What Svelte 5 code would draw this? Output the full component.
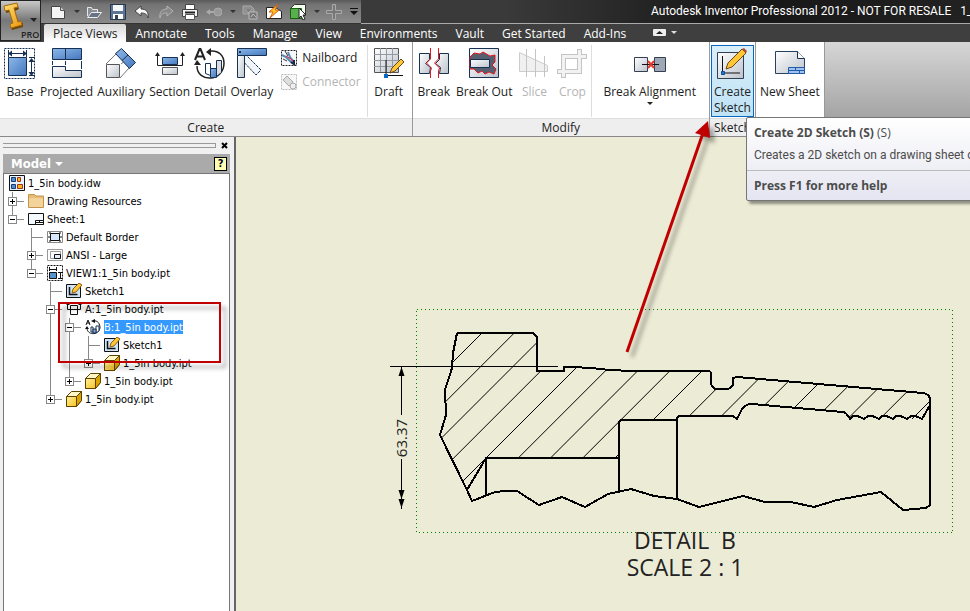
<script lang="ts">
  interface Tool {
    label: string;
    icon: string;
    disabled?: boolean;
  }

  interface TreeRow {
    label: string;
    icon: string;
    depth: number;
    last?: boolean;
    open?: boolean;
  }

  const quickIcons = ['new', 'open', 'save', 'undo', 'redo', 'print', 'back', 'copy', 'update', 'select', 'plus'];
  const tabs = ['Place Views', 'Annotate', 'Tools', 'Manage', 'View', 'Environments', 'Vault', 'Get Started', 'Add-Ins'];

  const createTools: Tool[] = [
    { label: 'Base', icon: 'base' },
    { label: 'Projected', icon: 'projected' },
    { label: 'Auxiliary', icon: 'auxiliary' },
    { label: 'Section', icon: 'section' },
    { label: 'Detail', icon: 'detail' },
    { label: 'Overlay', icon: 'overlay' },
  ];

  const modifyTools: Tool[] = [
    { label: 'Break', icon: 'break' },
    { label: 'Break Out', icon: 'breakout' },
    { label: 'Slice', icon: 'slice', disabled: true },
    { label: 'Crop', icon: 'crop', disabled: true },
  ];

  let rows = $state<TreeRow[]>([
    { label: '1_5in body.idw', icon: 'idw', depth: 0 },
    { label: 'Drawing Resources', icon: 'folder', depth: 1, open: false },
    { label: 'Sheet:1', icon: 'sheet', depth: 1, last: true, open: true },
    { label: 'Default Border', icon: 'border', depth: 2 },
    { label: 'ANSI - Large', icon: 'ansi', depth: 2, open: false },
    { label: 'VIEW1:1_5in body.ipt', icon: 'view', depth: 2, last: true, open: true },
    { label: 'Sketch1', icon: 'sketch', depth: 3 },
    { label: 'A:1_5in body.ipt', icon: 'sectionview', depth: 3, open: true },
    { label: 'B:1_5in body.ipt', icon: 'detailview', depth: 4, open: true },
    { label: 'Sketch1', icon: 'sketch', depth: 5 },
    { label: '1_5in body.ipt', icon: 'part', depth: 5, last: true, open: false },
    { label: '1_5in body.ipt', icon: 'part', depth: 4, last: true, open: false },
    { label: '1_5in body.ipt', icon: 'part', depth: 3, last: true, open: false },
  ]);

  let activeTab = $state(0);
  let selected = $state(8);

  // hide everything below a collapsed row
  const visible = $derived.by(() => {
    const out: number[] = [];
    let limit = Infinity;
    rows.forEach((row, i) => {
      if (row.depth > limit) return;
      limit = row.open === false ? row.depth : Infinity;
      out.push(i);
    });
    return out;
  });

  // does the branch at this depth go on below the row?
  function continues(index: number, depth: number): boolean {
    for (let i = index + 1; i < rows.length; i++) {
      if (rows[i].depth < depth) return false;
      if (rows[i].depth === depth) return true;
    }
    return false;
  }

  const hatch = Array.from({ length: 20 }, (_, k) => 815 + k * 32.25);
  const outline =
    'M457 333H533L537 337V371H564V367H573L591 368L610 370L631 371H708Q711 371 711 374V383Q712 389 717 389H727Q733 388 733 383V378L737 377L923 393Q930 394 930 400';
  const left = 'M457 333L453 353L452 368L445 390L446 415L440 435L467 490';
  const bore =
    'H677V418L679 416H733L737 419L741 411Q744 404 752 404L843 412Q846 412 850 419Q853 415 857 416T864 419Q868 415 872 416T879 419Q882 415 886 416T893 419Q896 415 900 416T907 419Q911 415 915 416T922 419L930 405';
</script>

{#snippet icon(name: string)}
  {#if name === 'new'}
    <path d="M1.500 2.500h9l4 4v8h-13z" fill="#f5f5f5" stroke="#444" /><path d="M10.500 2.500v4h4" fill="#ccc" stroke="#555" />
  {:else if name === 'open'}
    <path d="M1.500 12V3.500h4l1 2h5v3" fill="#8a8f96" stroke="#e8e8e8" /><path d="M1.500 13.500l4-5h10l-4 5z" fill="#667485" stroke="#eee" />
  {:else if name === 'save'}
    <path d="M.5 .5h15v15H.5z" fill="#5d7595" stroke="#26364c" /><path d="M3 1h10v6H3z" fill="#f4f6f9" /><path d="M3 10h10v5H3z" fill="#fff" /><path d="M5 11h3v4H5z" fill="#345" />
  {:else if name === 'undo'}
    <path d="M1 7l6-5v3c5 0 8 3 7 9-1-4-3-5-7-5v3z" fill="#fafafa" stroke="#444" />
  {:else if name === 'redo'}
    <path d="M15 7L9 2v3c-5 0-8 3-7 9 1-4 3-5 7-5v3z" fill="#888" stroke="#b4b4b4" />
  {:else if name === 'print'}
    <path d="M3.500 .5h9v6h-9z" fill="#fff" stroke="#444" /><path d="M.5 5.500h15v7H.5z" fill="#f2f2f2" stroke="#444" /><path d="M3 8.500h10" stroke="#222" stroke-width="2" /><path d="M3.500 10.500h9v5h-9z" fill="#fff" stroke="#555" />
  {:else if name === 'back'}
    <path d="M0 8l4-3v2h4v2H4v2z" fill="#aaa" /><circle cx="12" cy="8" r="4" fill="#999" stroke="#aaa" />
  {:else if name === 'copy'}
    <path d="M1 2h8l3 3v5H1zM3 6l4 3 3-4" fill="#8f8f8f" stroke="#aaa" /><path d="M7 8h8v7H7zM9 13l2-3 3 3" fill="#777" stroke="#bbb" />
  {:else if name === 'update'}
    <path d="M.5 3.500h9l6 4v7H.5z" fill="#fff" stroke="#222" /><path d="M12 0L3 8h4l-3 6 9-8H9z" fill="#ffc629" stroke="#d85b12" />
  {:else if name === 'select'}
    <path d="M.5 4.500l4-4h11v10l-4 4H.5z" fill="#efffea" stroke="#333" /><path d="M.5 4.500h11v10H.5z" fill="#58b04c" stroke="#16620f" /><path d="M9 4v10l2-2 2 4 2-1-2-4h3z" fill="#fff" stroke="#222" />
  {:else if name === 'plus'}
    <path d="M6.500 .5h3v6h6v3h-6v6h-3v-6h-6v-3h6z" fill="#777" stroke="#aaa" />
  {:else if name === 'base'}
    <path d="M.5 .5h30v30H.5z" fill="none" stroke="#173153" stroke-dasharray="2 1" /><path d="M4.500 9.500h18v18h-18z" fill="url(#blue)" stroke="#173153" />
    <path d="M4.500 2v7M22.500 2v7M5 5.500h17M25 9.500h6M25 27.500h6M27.500 11v16" fill="none" stroke="#173153" /><path d="M4 5.500l4-3v6zM23 5.500l-4-3v6zM27.500 10l-3 4h6zM27.500 28l-3-4h6z" fill="#173153" />
  {:else if name === 'projected'}
    <path d="M1.500 .5h29v11h-29zM14.500 .5v11" fill="url(#blue)" stroke="#173153" /><path d="M1.500 18.500h13v4h16v7h-29z" fill="url(#grey)" stroke="#173153" /><path d="M1.500 13v4M14.500 13v4M30.500 13v8" stroke="#173153" />
  {:else if name === 'auxiliary'}
    <path d="M1 16L11 6M15 30L25 19M16 16l5-4" stroke="#777" /><path d="M10.500 5.500l6-5 14 14-6 6zM17 12.500l6-5.500" fill="url(#blue)" stroke="#173153" /><path d="M1.500 16.500h13v13h-13z" fill="url(#grey)" stroke="#555" />
  {:else if name === 'section'}
    <path d="M8.500 9.500h15v7h-15z" fill="url(#blue)" stroke="#173153" /><path d="M8.500 19.500h15v7h-15z" fill="url(#grey)" stroke="#555" /><path d="M3.500 8v9.500h25V8" fill="none" stroke="#222" /><path d="M3.500 4L1 8h5zM28.500 4L26 8h5z" fill="#222" />
  {:else if name === 'detail'}
    <path d="M16 3c9-1 14 5 14 12 0 19-27 20-27 3" fill="none" stroke="#222" stroke-width="1.500" /><path d="M12 4l5-4v8zM3 12l-3 5h7z" fill="#222" /><path d="M1 12L5.500 1h1L11 12M3 8.500h6" fill="none" stroke="#222" stroke-width="2" />
    <path d="M11.500 15.500h5v12l-5-2z" fill="#fff" stroke="#173153" /><path d="M16.500 20.500h6v9h-6z" fill="url(#blue)" stroke="#173153" /><path d="M22.500 12.500h5v12l-5 4z" fill="#ddd" stroke="#173153" />
  {:else if name === 'overlay'}
    <path d="M6 3l19 19-5 5L2 8z" fill="#f1f4f8" stroke="#173153" stroke-dasharray="3 1" /><path d="M1.500 7.500h7v22h-7z" fill="url(#grey)" stroke="#173153" /><path d="M1.500 .5h29v7h-29z" fill="url(#blue)" stroke="#173153" /><circle cx="4" cy="4" r="1" fill="#111" />
  {:else if name === 'draft'}
    <path d="M1.500 .5h24v24h-24z" fill="url(#grey)" stroke="#555" /><path d="M7.500 0v24M13.500 0v24M19.500 0v24M1 6.500h25M1 12.500h25M1 18.500h25" stroke="#9299a1" /><path d="M13 12v15M15 27.500h15" stroke="#111" /><path d="M11 26h4v4h-4z" fill="#0868c7" />
    <path d="M17 25l2-5 9-9 3 3-9 9z" fill="#ffc735" stroke="#6d4616" />
  {:else if name === 'break'}
    <path d="M1.500 5.500h10v6l-4 4 5 4-1 6h-10z" fill="url(#grey)" stroke="#173153" /><path d="M30.500 5.500h-9v6l-4 4 5 4-1 6h9z" fill="url(#grey)" stroke="#173153" /><path d="M12.500 0v11l-4 4 5 5-1 3v7M20.500 0v11l-4 4 5 5-1 3v7" fill="none" stroke="#e51820" />
  {:else if name === 'breakout'}
    <path d="M1.500 .5h29v29h-29z" fill="url(#grey)" stroke="#173153" /><path d="M2 9l4-4 6 1 3-2 7 4 5-1v7l-3 3 4 4-2 5-5-2-4 2-3-3-4 2-4-4H2z" fill="#555f70" stroke="#e51820" /><path d="M2.500 11.500h19v8h-19z" fill="url(#grey)" stroke="#173153" />
  {:else if name === 'slice'}
    <path d="M1.500 4.500v19h28v-6z" fill="#f0f0f0" stroke="#ccc" /><path d="M8.500 1v28M17.500 1v28M26.500 8v21" stroke="#c4c4c4" />
  {:else if name === 'crop'}
    <path d="M7.500 30V8.500H31M1 23.500h22.500V1" fill="none" stroke="#c4c4c4" stroke-width="5" /><path d="M7.500 29V8.500H30M2 23.500h21.500V2" fill="none" stroke="#f2f2f2" stroke-width="3" />
  {:else if name === 'align'}
    <path d="M.5 9.500h13v14H.5z" fill="url(#grey)" stroke="#344052" /><path d="M20.500 9.500h11v14h-11z" fill="#9da7b5" stroke="#344052" /><path d="M8 16.500h17" stroke="#111" /><path d="M14 13l6 7m0-7l-6 7" stroke="#e53a2c" stroke-width="2" />
  {:else if name === 'createsketch'}
    <path d="M1.500 4.500h26v26h-26z" fill="url(#grey)" stroke="#333f50" /><path d="M6.500 8v17H24" fill="none" stroke="#111" /><path d="M5.500 23.500h3v3h-3z" fill="#2579cb" stroke="#0a4f9a" /><path d="M10 21l2-6L26 1l4 4-14 14z" fill="#ffc735" stroke="#6d4616" /><path d="M26 1l4 4 1-2-3-3z" fill="#b54e3a" />
  {:else if name === 'newsheet'}
    <path d="M1.500 3.500h22l7 7v15h-29z" fill="url(#grey)" stroke="#244263" /><path d="M23.500 3.500v7h7" fill="#fff" stroke="#173153" /><path d="M14.500 19.500h16v6h-16zM14 22.500h16M21.500 19v3M25.500 22v3" fill="#9fc3f0" stroke="#2459a5" />
  {:else if name === 'nailboard'}
    <path d="M.5 .5h15v15H.5z" fill="#f6f8fb" stroke="#222" stroke-dasharray="2 1" /><path d="M1 5l4 2 6 6M7 2l2 5 4 5" fill="none" stroke="#5a86b8" stroke-width="2" /><path d="M4 1l3 5M2 9l4 2" stroke="#333" /><path d="M5 6l5 3m0 0l3 4" stroke="#d32c2c" /><path d="M10 12l4 3M13 10v4" stroke="#172945" stroke-width="2" />
  {:else if name === 'connector'}
    <path d="M.5 .5h15v15H.5z" fill="#f7f7f7" stroke="#bbb" stroke-dasharray="2 1" /><path d="M2 6l4-4 6 6-4 4z" fill="#ddd" stroke="#aaa" /><circle cx="12" cy="12" r="3" fill="#eee" stroke="#aaa" />
  {:else if name === 'idw'}
    <path d="M.5 .5h15v15H.5z" fill="#e7f2fd" stroke="#111" /><path d="M2.500 2.500h4v4h-4zM2.500 9.500h4v4h-4z" fill="#4f8fd1" stroke="#113d78" /><path d="M8.500 2.500h3v4h-3zM8.500 9.500h5v4h-5z" fill="#ffb21c" stroke="#a33412" />
  {:else if name === 'folder'}
    <path d="M.5 3V1.500h6L8 3h7.500v11.500H.5z" fill="#e5bd79" stroke="#c4934c" /><path d="M1 5h14v9H1z" fill="#f3d39a" />
  {:else if name === 'sheet'}
    <path d="M.5 2.500h15v11H.5z" fill="#f4f9fe" stroke="#111" /><path d="M7.500 9.500h8v4h-8zM8 11.500h7M11.500 9v2" fill="#fff" stroke="#111" />
  {:else if name === 'border'}
    <path d="M.5 2.500h15v11H.5z" fill="#fff" stroke="#888" /><path d="M3.500 4.500h9v7h-9z" fill="#d8e8fb" stroke="#111" /><path d="M3 3v2M13 3v2M3 11v2M13 11v2M1 8h2M13 8h2" stroke="#111" />
  {:else if name === 'ansi'}
    <path d="M.5 2.500h15v11H.5zM3.500 4.500h10v7h-10z" fill="#fff" stroke="#999" /><path d="M7.500 7.500h6v4h-6z" fill="#e1edfc" stroke="#111" />
  {:else if name === 'view'}
    <path d="M.5 .5h15v15H.5z" fill="#fff" stroke="#111" stroke-dasharray="2 1" /><path d="M2.500 7.500h7v6h-7z" fill="#5793cd" stroke="#111" /><path d="M2.500 2v4M9.500 2v4M2 4.500h7M11 7.500h4M11 13.500h4M13.500 8v5" stroke="#111" />
  {:else if name === 'sketch'}
    <path d="M.5 1.500h14v13H.5z" fill="#cfe3f7" stroke="#111" /><path d="M3.500 4v7.500h8" fill="none" stroke="#111" stroke-width="1.500" /><path d="M6 10l1-4 6-6 3 2-6 7z" fill="#ffc735" stroke="#8b5d18" />
  {:else if name === 'sectionview'}
    <path d="M1.500 4v4.500h13V4M4.500 8V4.500h7V8M4.500 9v4.500h7V9" fill="none" stroke="#111" /><path d="M0 4h4L2 2zM12 4h4l-2-2z" fill="#111" />
  {:else if name === 'detailview'}
    <path d="M8 2c5-1 7 3 7 7-2 8-13 7-13 0" fill="none" stroke="#111" /><path d="M6 2l4-2v4zM2 7L0 10h4z" fill="#111" /><path d="M1 6l2-5 2 5M2 4h3" fill="none" stroke="#111" /><path d="M6 8h2v5H6zM11 7h3v5l-3 2z" fill="#fff" stroke="#173153" /><path d="M8 10h3v4H8z" fill="#85abd3" stroke="#173153" />
  {:else if name === 'part'}
    <path d="M.5 5.500l5-5h10v9l-5 6H.5z" fill="#fff7c5" stroke="#5e4300" /><path d="M.5 5.500h10v10H.5z" fill="url(#gold)" stroke="#5e4300" /><path d="M10.500 5.500l5-5v9l-5 6z" fill="#d9a400" stroke="#5e4300" />
  {/if}
{/snippet}

{#snippet tool(t: Tool)}
  <button class="tool" disabled={t.disabled}>
    <svg class="large" viewBox="0 0 32 32" aria-hidden="true">{@render icon(t.icon)}</svg>
    <span>{t.label}</span>
  </button>
{/snippet}

{#snippet smallTool(t: Tool)}
  <button class="small-tool" disabled={t.disabled}>
    <svg class="small" viewBox="0 0 16 16" aria-hidden="true">{@render icon(t.icon)}</svg>
    <span>{t.label}</span>
  </button>
{/snippet}

<div class="app">
  <svg class="defs" aria-hidden="true">
    <defs>
      <linearGradient id="blue" x2="1" y2="1"><stop stop-color="#8db8ea" /><stop offset="1" stop-color="#4478bd" /></linearGradient>
      <linearGradient id="grey" x2="1" y2="1"><stop stop-color="#fff" /><stop offset="1" stop-color="#bcc3cc" /></linearGradient>
      <linearGradient id="gold" x2="1" y2="1"><stop stop-color="#fff1a0" /><stop offset="1" stop-color="#f7c11d" /></linearGradient>
      <linearGradient id="logo" x2="1" y2="1"><stop stop-color="#ffe07a" /><stop offset="1" stop-color="#e8960c" /></linearGradient>
    </defs>
  </svg>

  <header class="top">
    <button class="app-button" aria-label="Application menu">
      <svg viewBox="0 0 39 39" aria-hidden="true">
        <path d="M5 8L17 5L18 8L14 10L18 23L22 22L22 26L11 29L10 26L13 24L9 11L5 12Z" fill="#6b4508" />
        <path d="M3 5L16 2L17 6L13 7L17 21L20 20L21 24L10 27L9 23L12 22L8 9L4 10Z" fill="url(#logo)" stroke="#a8690c" />
        <path d="M29 17h7l-3 4z" fill="#222" />
        <text x="20" y="37">PRO</text>
      </svg>
    </button>
    <div class="bars">
      <div class="title-bar">
        <div class="quick">
          {#each quickIcons as name}
            <button class="quick-button" aria-label={name}>
              <svg class="small" viewBox="0 0 16 16" aria-hidden="true">{@render icon(name)}</svg>
            </button>
            {#if name === 'new' || name === 'back' || name === 'select'}
              <span class="caret"></span>
            {/if}
          {/each}
          <svg class="customize" viewBox="0 0 8 8" aria-hidden="true"><path d="M0 0h8v1H0zM0 3h8L4 7z" fill="#111" /></svg>
        </div>
        <h1>Autodesk Inventor Professional 2012 - NOT FOR RESALE &nbsp; 1_</h1>
      </div>
      <nav class="tabs">
        {#each tabs as tab, i}
          <button class="tab" class:active={activeTab === i} onclick={() => (activeTab = i)}>{tab}</button>
        {/each}
        <button class="minimize" aria-label="Minimize ribbon">
          <svg viewBox="0 0 26 8" aria-hidden="true"><rect width="13" height="7" rx="1" fill="#eee" /><path d="M3 5h7L6.500 2z" fill="#222" /><path d="M18 2h6l-3 3z" fill="#ddd" /></svg>
        </button>
      </nav>
    </div>
  </header>

  <div class="ribbon">
    <section class="panel create">
      <div class="tools">
        {#each createTools as t}
          {@render tool(t)}
        {/each}
        <div class="stack">
          {@render smallTool({ label: 'Nailboard', icon: 'nailboard' })}
          {@render smallTool({ label: 'Connector', icon: 'connector', disabled: true })}
        </div>
        <div class="group">{@render tool({ label: 'Draft', icon: 'draft' })}</div>
      </div>
      <h2>Create</h2>
    </section>
    <section class="panel">
      <div class="tools">
        {#each modifyTools as t}
          {@render tool(t)}
        {/each}
        <div class="group align">
          <button class="tool">
            <svg class="large" viewBox="0 0 32 32" aria-hidden="true">{@render icon('align')}</svg>
            <span>Break Alignment</span>
            <span class="caret"></span>
          </button>
        </div>
      </div>
      <h2>Modify</h2>
    </section>
    <section class="panel sketch">
      <div class="tools">
        <div class="hot">
          <button class="tool" aria-describedby="tip">
            <svg class="large" viewBox="0 0 32 32" aria-hidden="true">{@render icon('createsketch')}</svg>
            <span>Create<br />Sketch</span>
          </button>
          <div class="tooltip" id="tip" role="tooltip">
            <div class="tip-body">
              <p><b>Create 2D Sketch (S)</b> (S)</p>
              <p class="tip-text">Creates a 2D sketch on a drawing sheet or view</p>
            </div>
            <p class="tip-help"><b>Press F1 for more help</b></p>
          </div>
        </div>
      </div>
      <h2>Sketch</h2>
    </section>
    <section class="panel sheets">
      <div class="tools">
        {@render tool({ label: 'New Sheet', icon: 'newsheet' })}
      </div>
    </section>
  </div>

  <div class="workspace">
    <aside class="browser">
      <div class="grip">
        <span class="grip-lines"></span>
        <button class="close" aria-label="Close">
          <svg viewBox="0 0 7 7" aria-hidden="true"><path d="M1 1l5 5M6 1L1 6" stroke="#000" stroke-width="2" /></svg>
        </button>
      </div>
      <div class="browser-head">
        <button class="model">Model <span class="caret"></span></button>
        <button class="help" aria-label="Help">?</button>
      </div>
      <ul class="tree">
        {#each visible as i (i)}
          {@const row = rows[i]}
          <li>
            {#each { length: row.depth } as _, d}
              {#if d + 1 < row.depth}
                <svg class="guide" viewBox="0 0 19 18" aria-hidden="true">
                  {#if continues(i, d + 1)}<path d="M3.500 0v18" />{/if}
                </svg>
              {:else if row.open === undefined}
                <svg class="guide" viewBox="0 0 19 18" aria-hidden="true"><path d="M3.500 0v18M3 9.500h12" /></svg>
              {:else}
                <button class="expander" aria-label={row.open ? 'Collapse' : 'Expand'} onclick={() => (row.open = !row.open)}>
                  <svg class="guide" viewBox="0 0 19 18" aria-hidden="true">
                    <path d={row.last ? 'M3.500 0v9M3 9.500h12' : 'M3.500 0v18M3 9.500h12'} />
                    <rect x="-.5" y="5.500" width="8" height="8" />
                    <path class="sign" d={row.open ? 'M1 9.500h5' : 'M1 9.500h5M3.500 7v5'} />
                  </svg>
                </button>
              {/if}
            {/each}
            <svg class="small" viewBox="0 0 16 16" aria-hidden="true">{@render icon(row.icon)}</svg>
            <button class="node" class:selected={selected === i} onclick={() => (selected = i)}>{row.label}</button>
          </li>
        {/each}
      </ul>
    </aside>

    <main class="canvas">
      <svg class="drawing" viewBox="236 137 734 474" role="img" aria-label="Detail B, scale 2 : 1">
        <clipPath id="solid">
          <path d="{outline}V405L922 419L907 419H850L843 412L752 404Q744 404 741 411L737 416H677V420H619V458H486L467 490L440 435L446 415L445 390L452 368L453 353Z" />
        </clipPath>
        <g class="hatch" clip-path="url(#solid)">
          {#each hatch as sum}
            <path d="M{sum - 520} 520L{sum - 320} 320" />
          {/each}
        </g>
        <g class="edges">
          <path d={outline} />
          <path d={left} />
          <path d="M467 490L486 458H619V422L621 420{bore}" />
          <path d="M467 490L472 501L495 492L505 491H517L539 505L562 497L585 507L608 494L631 489L654 496L677 499L699 507L743 496L765 502H791L814 507L837 500L881 492L903 510L926 508L930 505V400" />
          <path d="M486 458V495M619 458V491M677 420V499" />
        </g>
        <path class="thin" d="M390 366.500h168M401.500 367v48M401.500 459v50" />
        <path d="M401.500 367l-3 9h6zM401.500 499l-3-9h6zM401.500 508l-3-9h6z" />
        <rect class="bounds" x="416.500" y="309.500" width="536" height="223" />
        <text class="dimension" transform="translate(407 438) rotate(-90)">63.37</text>
        <text class="caption" x="685" y="549">DETAIL &nbsp;B</text>
        <text class="caption" x="685" y="576">SCALE 2 : 1</text>
      </svg>
    </main>
  </div>

  <svg class="markup" viewBox="0 0 970 611" aria-hidden="true">
    <rect x="59" y="303" width="161" height="59" />
    <path class="shaft" d="M627 352L703 133" />
    <path class="head" d="M708 121L695 133L710 138Z" />
  </svg>
</div>

<style>
  :global(body) {
    margin: 0;
    font-family: 'Open Sans', 'Noto Sans', sans-serif;
    font-size: 12px;
    color: #222;
  }

  button {
    font: inherit;
    color: inherit;
    background: none;
    border: 0;
    padding: 0;
    margin: 0;
  }

  h1, h2, p, ul {
    margin: 0;
    padding: 0;
    font-size: 12px;
    font-weight: 400;
  }

  .app {
    position: relative;
    min-height: 100vh;
    display: flex;
    flex-direction: column;
    overflow: hidden;
  }

  .defs {
    position: absolute;
    width: 0;
    height: 0;
  }

  .large {
    display: block;
    width: 32px;
    height: 32px;
    flex-shrink: 0;
  }

  .small {
    display: block;
    width: 16px;
    height: 16px;
    flex-shrink: 0;
  }

  .caret {
    display: inline-block;
    border: 3px solid transparent;
    border-top-color: currentColor;
    border-bottom: 0;
  }

  /* Title bar and tabs */
  .top {
    display: flex;
    height: 42px;
    background: #3f3f3f;
  }

  .app-button {
    width: 41px;
    height: 41px;
    flex-shrink: 0;
    background: linear-gradient(#c8c8c8, #777 50%, #999);
    border: 1px solid #222;
  }

  .app-button svg {
    display: block;
    width: 39px;
    height: 39px;
  }

  .app-button text {
    font-size: 9px;
    font-weight: 600;
    fill: #222;
  }

  .bars {
    flex: 1;
    min-width: 0;
  }

  .title-bar {
    display: flex;
    height: 24px;
    background: linear-gradient(90deg, #3a3a3a 50%, #161616 75%, #222);
  }

  .quick {
    display: flex;
    align-items: center;
    gap: 8px;
    width: 320px;
    padding-left: 9px;
    box-sizing: border-box;
    flex-shrink: 0;
    color: #333;
    background: linear-gradient(#5a5a5a, #747474 20%, #8a8a8a);
    border-bottom: 1px solid #333;
  }

  .quick .caret {
    margin-right: -2px;
  }

  .customize {
    width: 8px;
    height: 8px;
  }

  h1 {
    flex: 1;
    padding-left: 290px;
    line-height: 23px;
    font-family: Roboto, 'Open Sans', sans-serif;
    color: #fff;
    white-space: nowrap;
    overflow: hidden;
    border-bottom: 1px solid #aaa;
  }

  .tabs {
    display: flex;
    height: 18px;
    padding-left: 3px;
    color: #fff;
  }

  .tab {
    padding: 1px 9px 0;
    line-height: 17px;
    white-space: nowrap;
  }

  .tab.active {
    color: #222;
    background: linear-gradient(#d8d8d8, #fff);
    border-radius: 2px 2px 0 0;
  }

  .minimize {
    margin-left: 18px;
  }

  .minimize svg {
    display: block;
    width: 26px;
    height: 8px;
  }

  /* Ribbon */
  .ribbon {
    display: flex;
    height: 95px;
    background: linear-gradient(#d6d6d6, #989898);
    border-bottom: 1px solid #888;
    box-sizing: border-box;
  }

  .panel {
    display: flex;
    flex-direction: column;
    background: #fff;
    border-right: 1px solid #999;
    box-sizing: border-box;
  }

  .tools {
    display: flex;
    flex: 1;
    min-height: 0;
    padding: 3px 2px 1px;
  }

  .panel h2 {
    line-height: 17px;
    text-align: center;
    background: #eee;
    border-top: 1px solid #ddd;
  }

  .tool {
    display: flex;
    flex-direction: column;
    align-items: center;
    gap: 4px;
    padding: 3px 3px 0;
    line-height: 16px;
    white-space: nowrap;
  }

  .create .tool {
    padding: 3px 2px 0;
  }

  .tool:disabled,
  .small-tool:disabled {
    color: #b4b4b4;
  }

  .tool .caret {
    margin-top: -2px;
  }

  .stack {
    display: flex;
    flex-direction: column;
    gap: 8px;
    padding: 5px 6px;
  }

  .small-tool {
    display: flex;
    align-items: center;
    gap: 5px;
    line-height: 16px;
  }

  .group {
    display: flex;
    border-left: 1px solid #ddd;
    padding: 0 3px;
  }

  .group.align {
    padding: 0 8px;
  }

  .sketch .tools {
    padding: 3px 1px 1px;
  }

  .hot {
    position: relative;
    display: flex;
  }

  .hot .tool {
    padding: 2px 2px 0;
    background: linear-gradient(#d9effa, #bfe2f5);
    border: 1px solid #0a66c2;
  }

  .tooltip {
    position: absolute;
    top: 72px;
    left: 35px;
    z-index: 3;
    color: #4c4c4c;
    white-space: nowrap;
    background: linear-gradient(#fff, #e4e5f0);
    border: 1px solid #767676;
    border-radius: 2px;
    box-shadow: 3px 3px 3px rgba(0, 0, 0, 0.4);
  }

  .tip-body {
    padding: 4px 7px;
    line-height: 22px;
    border-bottom: 1px solid #bbb;
  }

  .tip-text {
    font-family: Roboto, 'Open Sans', sans-serif;
  }

  .tip-help {
    padding: 0 7px;
    line-height: 29px;
  }

  .sheets .tool {
    padding: 3px 2px 0;
  }

  /* Model browser */
  .workspace {
    display: flex;
    flex: 1;
  }

  .browser {
    display: flex;
    flex-direction: column;
    width: 236px;
    padding: 0 4px 0 3px;
    box-sizing: border-box;
    flex-shrink: 0;
    background: #f0f0f0;
    border-right: 2px solid #666;
    font-family: 'DejaVu Sans Condensed', 'DejaVu Sans', sans-serif;
    font-size: 11px;
  }

  .grip {
    display: flex;
    align-items: center;
    gap: 5px;
    height: 17px;
  }

  .grip-lines {
    flex: 1;
    height: 3px;
    border: 1px solid #999;
    border-left: 0;
  }

  .close svg {
    display: block;
    width: 7px;
    height: 7px;
    margin-right: 2px;
  }

  .browser-head {
    display: flex;
    align-items: center;
    justify-content: space-between;
    height: 19px;
    padding: 0 3px 0 8px;
    background: #aaa;
  }

  .model {
    color: #fff;
    font-size: 13px;
    font-weight: 700;
  }

  .model .caret {
    border-width: 4px;
    border-bottom: 0;
    margin-bottom: 2px;
  }

  .help {
    width: 13px;
    height: 14px;
    line-height: 12px;
    font-weight: 700;
    color: #003;
    background: #ffffb0;
    border: 1px solid #000;
  }

  .tree {
    flex: 1;
    list-style: none;
    background: #fff;
    border: 1px solid #777;
    border-bottom: 0;
    padding-left: 5px;
  }

  .tree li {
    display: flex;
    align-items: center;
    height: 18px;
  }

  .guide {
    display: block;
    width: 19px;
    height: 18px;
    overflow: visible;
    fill: #fff;
    stroke: #888;
  }

  .guide .sign {
    stroke: #000;
  }

  .node {
    margin-left: 3px;
    padding-top: 1px;
    font-size: 11px;
    line-height: 13px;
    color: #000;
    white-space: nowrap;
  }

  .node.selected {
    color: #fff;
    background: #3399ff;
  }

  /* Drawing sheet */
  .canvas {
    flex: 1;
    min-width: 0;
    overflow: hidden;
    background: #ececd6;
  }

  .drawing {
    display: block;
    width: 734px;
    height: 474px;
  }

  .hatch {
    stroke: #000;
  }

  .edges {
    fill: none;
    stroke: #000;
    stroke-width: 2;
    stroke-linejoin: round;
    shape-rendering: crispEdges;
  }

  .thin {
    stroke: #000;
  }

  .bounds {
    fill: none;
    stroke: #008000;
    stroke-dasharray: 1 3;
    shape-rendering: crispEdges;
  }

  .dimension {
    font-size: 15px;
    text-anchor: middle;
    fill: #222;
  }

  .caption {
    font-size: 23px;
    text-anchor: middle;
    fill: #222;
  }

  .markup {
    position: absolute;
    top: 0;
    left: 0;
    z-index: 2;
    width: 970px;
    height: 611px;
    pointer-events: none;
    filter: drop-shadow(5px 5px 2px rgba(0, 0, 0, 0.35));
  }

  .markup rect,
  .shaft {
    fill: none;
    stroke: #c00000;
    stroke-width: 2;
  }

  .markup .shaft {
    stroke-width: 3;
  }

  .head {
    fill: #c00000;
  }
</style>
